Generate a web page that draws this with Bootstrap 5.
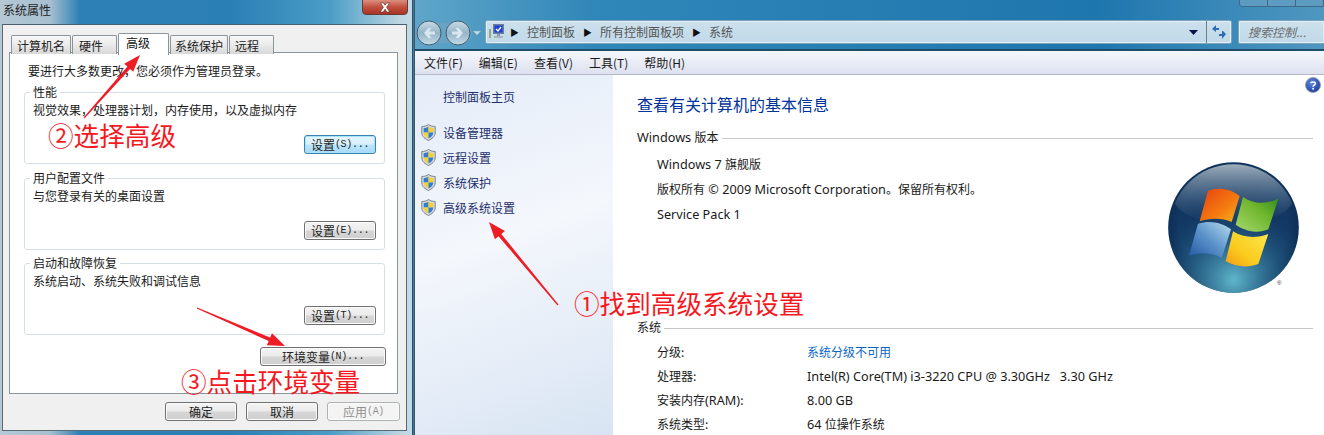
<!doctype html>
<html lang="zh-CN">
<head>
<meta charset="utf-8">
<title>系统属性</title>
<link href="https://cdn.jsdelivr.net/npm/bootstrap@5.3.0/dist/css/bootstrap.min.css" rel="stylesheet">
<style>
html,body{height:435px;overflow:hidden}
body{width:1324px;position:relative;font:12px/16px "Noto Sans CJK SC","Liberation Sans",sans-serif;color:#1a1a1a;background:linear-gradient(90deg,#9fc3d8,#2a7fb5 30%,#4f9cc6)}
.win-dlg{position:absolute;left:0;top:0;width:413px;height:435px;background:linear-gradient(90deg,#b4c8d4 0,#a7c0d0 50px,#2c80b4 80px,#2a7fb5 230px,#4a9dc6 330px,#bcd6e2 400px,#c4dbe6 100%);border-right:1px solid #3b4a55}
.dlg-title{height:24px;padding:1px 0 0 3px;font-size:12px;line-height:17px;color:#222}
.dlg-close{position:absolute;left:362px;top:-1px;width:46px;height:16px;background:linear-gradient(#dc8f80,#c2503f 50%,#a83526);border:1px solid #6b3a36;border-radius:0 0 4px 4px}
.dlg-body{margin:0 5px 0 2px;height:407px;background:#f0f0f0;border:1px solid #5b6b75;border-top-color:#4a6070;padding:8px 8px 0 6px}
.win-tabs{padding-left:2px;gap:1px;border:0;height:20px;align-items:flex-end;position:relative;z-index:1}
.win-tabs .nav-link{height:19px;padding:0 5px;min-width:45px;border:1px solid #8c949b;border-bottom:0;border-radius:2px 2px 0 0;background:linear-gradient(#f7f7f7,#ececec 45%,#d8d8d8);color:#222;font-size:12px;line-height:19px;margin:0}
.win-tabs .nav-item:nth-child(1) .nav-link{min-width:59px}
.win-tabs .nav-item:nth-child(2) .nav-link{padding-left:6px}
.win-tabs .nav-item:nth-child(4) .nav-link{min-width:57px;padding:0 4px}
.win-tabs .nav-link.active{height:22px;min-width:51px;padding-left:7px;background:#fff;border-color:#8c949b;line-height:17px;margin-bottom:-1px;color:#111}
.dlg-panel{height:342px;margin-top:-1px;background:#fff;border:1px solid #8c949b;padding:10px 12px 0 14px}
.dlg-note{padding-left:4px;margin-bottom:5px}
.win-group{height:80px;border:1px solid #d5dfe5;border-radius:3px;padding:0 9px 0 8px;margin:0 0 6px;display:flex;flex-direction:column}
.win-group+.win-group+.win-group{margin-top:-1px}
.win-group legend{float:none;width:auto;font-size:12px;line-height:16px;padding:0 3px;margin:0 0 2px -3px}
.win-group p{margin:0;line-height:16px}
.win-btn{display:flex;align-items:center;justify-content:center;width:72px;height:19px;padding:0;border:1px solid #707070;border-radius:3px;background:linear-gradient(#f4f4f4,#ebebeb 48%,#d6d6d6 52%,#cfcfcf);font-size:12px;line-height:17px;color:#222;box-shadow:inset 0 0 0 1px #fbfbfb}
.win-btn:hover{border-color:#707070;color:#222}
.win-btn.focused{border-color:#3c7fb1;background:linear-gradient(#e5f5fc,#d9f0fb 48%,#bee6fd 52%,#a7d9f5);box-shadow:inset 0 0 0 1px #a6e4f7}
.win-btn.env{width:126px}
.win-btn.off{width:73px;border-color:#adb2b5;background:#f4f4f4;color:#8f8f8f;opacity:1}
.win-acc{font:10px/17px "Liberation Mono",monospace;letter-spacing:-.3px}
.group-act{margin-top:17px;margin-right:-1px}
.dlg-act{margin:8px -2px 0 0;gap:9px}
.dlg-panel .group-env{margin:12px -1px 0 0}
.win-cp{position:absolute;left:414px;top:0;width:910px;height:435px;background:#fff;border-left:1px solid #3c5566}
.cp-bar{height:51px;padding:0 0 5px 0;background:linear-gradient(90deg,#5fa5c9,#2f86b8 20%,#1e76ae 75%,#4f97c0);border-bottom:2px solid #1f4c68}
.cp-nav{width:70px;height:30px;flex:none;margin-bottom:-3px}
.cp-addr{width:747px;height:24px;background:linear-gradient(#cde0ec,#c0d9e9);border:1px solid #7ea3b8;border-radius:2px;box-shadow:inset 0 0 0 1px #e3eff5;color:#555;font-size:12px;padding-left:3px}
.cp-addr>svg:first-child{flex:none;margin-right:-6px}
.cp-sep{color:#111;font-size:9px;line-height:1;margin:0 8px}
.cp-drop{margin-left:auto;width:26px;height:100%;display:flex;align-items:center;justify-content:center}
.cp-go{width:25px;height:100%;border-left:1px solid #6f7f88;display:flex;align-items:center;justify-content:center}
.cp-search{margin-left:6px;flex:1;height:24px;background:linear-gradient(#cde0ec,#c0d9e9);border:1px solid #7ea3b8;border-right:0;border-radius:2px 0 0 2px;box-shadow:inset 0 0 0 1px #e3eff5;font-style:italic;color:#6a6a6a;padding-left:9px;line-height:21px;white-space:nowrap}
.cp-ctrl{position:absolute;left:824px;top:-1px;height:8px;width:86px;border:1px solid #3e6a86;border-radius:0 0 3px 3px;background:#5d9cc0}
.cp-ctrl i{display:block;height:100%;border-right:1px solid #3e6a86}
.cp-menu{height:24px;background:linear-gradient(#f3f6fb,#eef1f8 30%,#dde1f0);border-bottom:1px solid #b5b9c4;padding-left:9px;gap:16px;line-height:23px;color:#1a1a1a}
.cp-split{height:360px}
.cp-side{width:198px;flex:none;background:linear-gradient(160deg,#e4ecf8,#f4f7fc 45%,#d8e4f3);padding:14px 0 0 6px;color:#1d2f6a}
.cp-home{padding-left:22px;height:16px;margin-bottom:15px}
.cp-link{height:25px;gap:7px}
.cp-main{flex:1;padding:2px 11px 0 24px;min-width:0}
.cp-help{height:16px;justify-content:flex-end;margin-right:-8px}
.cp-h{font:400 16px/22px "Noto Sans CJK SC",sans-serif;color:#003399;margin:0 0 14px}
.cp-sect{gap:3px;height:16px;line-height:16px}
.cp-sect hr{flex:1;margin:3px 0 0;border:0;border-top:1px solid #c8c8c8;opacity:1}
.cp-ver{height:168px;margin-top:6px;padding-left:20px}
.cp-ver p{margin:0;line-height:25px}
.cp-logo{margin:11px 14px 0 0;flex:none}
.cp-spec{padding:0 0 0 20px;margin-top:5px}
.cp-row{height:24px;line-height:24px}
.cp-row>span:first-child{width:150px;flex:none}
.cp-blue{color:#0b66c3}
.lat{font:12.7px/16px "Noto Sans",sans-serif}
.cp-val{line-height:24px}
.note-a{position:absolute;color:#f5191f;font-size:25.6px;line-height:26px;white-space:nowrap;font-family:"Noto Sans CJK SC",sans-serif}
.note-1{left:574px;top:290px}.note-2{left:48px;top:122px}.note-3{left:181px;top:368px}
.note-arrows{position:absolute;left:0;top:0;width:1324px;height:435px;pointer-events:none}
</style>
</head>
<body>

<section class="win-dlg">
  <div class="dlg-title">系统属性</div>
  <div class="dlg-close d-flex align-items-center justify-content-center">
    <svg width="14" height="11" viewBox="0 0 14 11"><path d="M2.5 1h3L7 3.2 8.5 1h3L8.6 5.2 11.8 10h-3L7 7.2 5.2 10h-3l3.200-4.800z" fill="#fff" stroke="#5b2a25" stroke-width=".6"/></svg>
  </div>
  <div class="dlg-body">
    <ul class="nav nav-tabs win-tabs">
      <li class="nav-item"><a class="nav-link" href="#">计算机名</a></li>
      <li class="nav-item"><a class="nav-link" href="#">硬件</a></li>
      <li class="nav-item"><a class="nav-link active" href="#">高级</a></li>
      <li class="nav-item"><a class="nav-link" href="#">系统保护</a></li>
      <li class="nav-item"><a class="nav-link" href="#">远程</a></li>
    </ul>
    <div class="dlg-panel">
      <p class="dlg-note">要进行大多数更改，您必须作为管理员登录。</p>
      <fieldset class="win-group">
        <legend>性能</legend>
        <p>视觉效果，处理器计划，内存使用，以及虚拟内存</p>
        <div class="d-flex justify-content-end group-act"><button class="btn win-btn focused">设置<span class="win-acc">(S)...</span></button></div>
      </fieldset>
      <fieldset class="win-group">
        <legend>用户配置文件</legend>
        <p>与您登录有关的桌面设置</p>
        <div class="d-flex justify-content-end group-act"><button class="btn win-btn">设置<span class="win-acc">(E)...</span></button></div>
      </fieldset>
      <fieldset class="win-group">
        <legend>启动和故障恢复</legend>
        <p>系统启动、系统失败和调试信息</p>
        <div class="d-flex justify-content-end group-act"><button class="btn win-btn">设置<span class="win-acc">(T)...</span></button></div>
      </fieldset>
      <div class="d-flex justify-content-end group-env"><button class="btn win-btn env">环境变量<span class="win-acc">(N)...</span></button></div>
    </div>
    <div class="d-flex justify-content-end dlg-act">
      <button class="btn win-btn">确定</button>
      <button class="btn win-btn">取消</button>
      <button class="btn win-btn off" disabled>应用<span class="win-acc">(A)</span></button>
    </div>
  </div>
</section>

<section class="win-cp">
  <div class="cp-ctrl d-flex"><i class="flex-grow-1"></i><i class="flex-grow-1"></i><i class="flex-grow-1"></i></div>
  <div class="cp-bar d-flex align-items-end">
    <svg class="cp-nav" viewBox="0 0 70 30">
      <defs>
        <linearGradient id="navG" x1="0" y1="0" x2="0" y2="1"><stop offset="0" stop-color="#c9dbe6"/><stop offset=".5" stop-color="#93b4c8"/><stop offset="1" stop-color="#c7dbe6"/></linearGradient>
      </defs>
      <g transform="translate(0 1.5)">
      <rect x="1" y="4" width="56" height="21" rx="10" fill="#6ea4c2" opacity=".7"/>
      <circle cx="14" cy="14.500" r="12" fill="url(#navG)" stroke="#3f5d70"/>
      <circle cx="43" cy="14.500" r="12" fill="url(#navG)" stroke="#3f5d70"/>
      <path d="M20 13h-6l2.500-3.500h-3L9 14.500l4.500 5h3L14 16h6z" fill="#e6eff4" opacity=".85"/>
      <path d="M37 13h6l-2.500-3.500h3l4.500 5-4.500 5h-3L43 16h-6z" fill="#e6eff4" opacity=".85"/>
      <path d="M58 12.500h8l-4 4z" fill="#c6dbe7" stroke="#7ea3b8" stroke-width=".5"/>
      </g>
    </svg>
    <div class="cp-addr d-flex align-items-center">
      <svg width="19" height="18" viewBox="0 0 19 18"><rect x="0" y="6" width="2" height="9" fill="#9aa58a"/><rect x="4" y="1" width="11" height="10" fill="#6c7f99"/><rect x="5.500" y="2.500" width="8" height="7" fill="#1f3fd6"/><path d="M7 6l2 2 3-4" stroke="#fff" stroke-width="1.300" fill="none"/><rect x="8" y="11" width="3" height="2" fill="#8b98a6"/><rect x="5" y="13" width="9" height="2" fill="#a9b3bd"/></svg>
      <span class="cp-sep">▶</span><span>控制面板</span>
      <span class="cp-sep">▶</span><span>所有控制面板项</span>
      <span class="cp-sep">▶</span><span>系统</span>
      <div class="cp-drop"><svg width="9" height="5" viewBox="0 0 9 5"><path d="M0 0h9L4.500 5z" fill="#0d1250"/></svg></div>
      <div class="cp-go"><svg width="16" height="16" viewBox="0 0 16 16"><path d="M5 1L1 5l4 3V6h3V4H5z" fill="#2a6fb5"/><path d="M11 15l4-5-3-3-1 0v3H8v2h3z" fill="#2a6fb5"/></svg></div>
    </div>
    <div class="cp-search">搜索控制...</div>
  </div>
  <nav class="cp-menu d-flex">
    <span>文件(F)</span><span>编辑(E)</span><span>查看(V)</span><span>工具(T)</span><span>帮助(H)</span>
  </nav>
  <div class="cp-split d-flex">
    <aside class="cp-side">
      <div class="cp-home">控制面板主页</div>
      <div class="cp-link d-flex align-items-center"><svg width="15" height="17" viewBox="0 0 15 17"><use href="#shield"/></svg><span>设备管理器</span></div>
      <div class="cp-link d-flex align-items-center"><svg width="15" height="17" viewBox="0 0 15 17"><use href="#shield"/></svg><span>远程设置</span></div>
      <div class="cp-link d-flex align-items-center"><svg width="15" height="17" viewBox="0 0 15 17"><use href="#shield"/></svg><span>系统保护</span></div>
      <div class="cp-link d-flex align-items-center"><svg width="15" height="17" viewBox="0 0 15 17"><use href="#shield"/></svg><span>高级系统设置</span></div>
    </aside>
    <main class="cp-main">
      <div class="cp-help d-flex">
        <svg width="16" height="16" viewBox="0 0 16 16"><defs><radialGradient id="helpG" cx=".4" cy=".35" r=".7"><stop offset="0" stop-color="#5d8be0"/><stop offset="1" stop-color="#1a3a9a"/></radialGradient></defs><circle cx="8" cy="8" r="7.500" fill="url(#helpG)" stroke="#9aa2ad"/><path d="M5.800 6.200C6 4.600 10.300 4.300 10.300 6.500c0 1.700-2.200 1.500-2.200 3.300" stroke="#fff" stroke-width="1.600" fill="none"/><circle cx="8.100" cy="11.800" r="1" fill="#fff"/></svg>
      </div>
      <h1 class="cp-h">查看有关计算机的基本信息</h1>
      <div class="cp-sect d-flex align-items-center"><span><span class="lat">Windows </span>版本</span><hr></div>
      <div class="cp-ver d-flex justify-content-between">
        <div>
          <p><span class="lat">Windows 7 </span>旗舰版</p>
          <p>版权所有<span class="lat"> © 2009 Microsoft Corporation</span>。保留所有权利。</p>
          <p><span class="lat">Service Pack 1</span></p>
        </div>
        <svg class="cp-logo" width="131" height="135" viewBox="55 38 393 405">
          <defs>
            <radialGradient id="orb" cx=".5" cy=".48" r=".55"><stop offset="0" stop-color="#0e2c58"/><stop offset=".75" stop-color="#123863"/><stop offset="1" stop-color="#0b2a52"/></radialGradient>
            <linearGradient id="orbTop" x1="0" y1="0" x2="0" y2="1"><stop offset="0" stop-color="#c4ced4" stop-opacity=".8"/><stop offset="1" stop-color="#4a6a88" stop-opacity="0"/></linearGradient>
            <radialGradient id="orbLow" cx=".5" cy=".9" r=".6"><stop offset="0" stop-color="#5fb6cc"/><stop offset="1" stop-color="#1d5f86" stop-opacity="0"/></radialGradient>
            <linearGradient id="fR" x1="0" y1="0" x2="1" y2="1"><stop offset="0" stop-color="#e8400f"/><stop offset=".6" stop-color="#f47a10"/><stop offset="1" stop-color="#f6b91d"/></linearGradient>
            <linearGradient id="fG" x1="0" y1="1" x2="1" y2="0"><stop offset="0" stop-color="#a6d86b"/><stop offset=".6" stop-color="#6eb52d"/><stop offset="1" stop-color="#2f8a1c"/></linearGradient>
            <linearGradient id="fB" x1="1" y1="0" x2="0" y2="1"><stop offset="0" stop-color="#b9dcec"/><stop offset=".5" stop-color="#5c93cb"/><stop offset="1" stop-color="#2456a4"/></linearGradient>
            <linearGradient id="fY" x1="1" y1="0" x2="0" y2="1"><stop offset="0" stop-color="#fbe84f"/><stop offset=".6" stop-color="#fbcc1f"/><stop offset="1" stop-color="#f49a12"/></linearGradient>
            <clipPath id="orbClip"><circle cx="251.500" cy="234.500" r="190"/></clipPath>
          </defs>
          <circle cx="251.500" cy="234.500" r="196" fill="url(#orb)"/>
          <circle cx="251.500" cy="234.500" r="196" fill="url(#orbLow)"/>
          <ellipse cx="251.500" cy="135" rx="185" ry="92" fill="url(#orbTop)" clip-path="url(#orbClip)"/>
          <path d="M175 124C205 112 245 118 270 140L246 218C218 205 180 205 150 216Z" fill="url(#fR)"/>
          <path d="M280 143C310 165 350 165 386 148L356 240C325 255 285 245 258 226Z" fill="url(#fG)"/>
          <path d="M145 223C180 212 218 220 244 240L216 326C185 308 150 308 118 319Z" fill="url(#fB)"/>
          <path d="M250 246C280 265 320 268 356 254L326 344C290 358 255 350 228 336Z" fill="url(#fY)"/>
          <text x="382" y="406" font-size="18" fill="#333" font-family="Liberation Sans, sans-serif">®</text>
        </svg>
      </div>
      <div class="cp-sect d-flex align-items-center"><span>系统</span><hr></div>
      <div class="cp-spec">
        <div class="cp-row d-flex"><span>分级:</span><span class="cp-blue">系统分级不可用</span></div>
        <div class="cp-row d-flex"><span>处理器:</span><span class="lat cp-val">Intel(R) Core(TM) i3-3220 CPU @ 3.30GHz&nbsp;&nbsp; 3.30 GHz</span></div>
        <div class="cp-row d-flex"><span>安装内存<span class="lat">(RAM)</span>:</span><span class="lat cp-val">8.00 GB</span></div>
        <div class="cp-row d-flex"><span>系统类型:</span><span><span class="lat">64 </span>位操作系统</span></div>
      </div>
    </main>
  </div>
</section>

<svg width="0" height="0" class="position-absolute">
  <symbol id="shield" viewBox="0 0 15 17">
    <path d="M7.500 .5C5.500 2 3 2.500 .8 2.500V9c0 3.500 3.500 6 6.700 7.500C10.700 15 14.200 12.500 14.200 9V2.500C12 2.500 9.500 2 7.500 .5Z" fill="#d5d8dc" stroke="#7d8389"/>
    <path d="M7.500 2.500C6 3.500 4.300 4 2.700 4v4.500h4.800z" fill="#2f7fd0"/>
    <path d="M7.500 2.500C9 3.500 10.700 4 12.300 4v4.500H7.500z" fill="#f7cf2f"/>
    <path d="M2.700 8.500h4.800v6C5.500 13.500 3 12 2.700 8.500z" fill="#f7cf2f"/>
    <path d="M12.300 8.500H7.500v6c2-1 4.500-2.500 4.800-6z" fill="#2f7fd0"/>
  </symbol>
</svg>

<div class="note-a note-1">①找到高级系统设置</div>
<div class="note-a note-2">②选择高级</div>
<div class="note-a note-3">③点击环境变量</div>
<svg class="note-arrows" viewBox="0 0 1324 435">
  <g fill="#ee1c25">
    <polygon points="84.400,118.400 130,68.900 133.200,71.700 140,55 124.200,63.700 127.400,66.500 83.600,117.600"/>
    <polygon points="558.500,304.600 501.300,234 504.900,230.900 489,222 494.900,239.300 498.500,236.200 557.500,305.400"/>
    <polygon points="196.800,308.600 268.700,341 266.800,345.300 285,346 272,333.300 270.100,337.600 197.200,307.400"/>
  </g>
</svg>
</body>
</html>
